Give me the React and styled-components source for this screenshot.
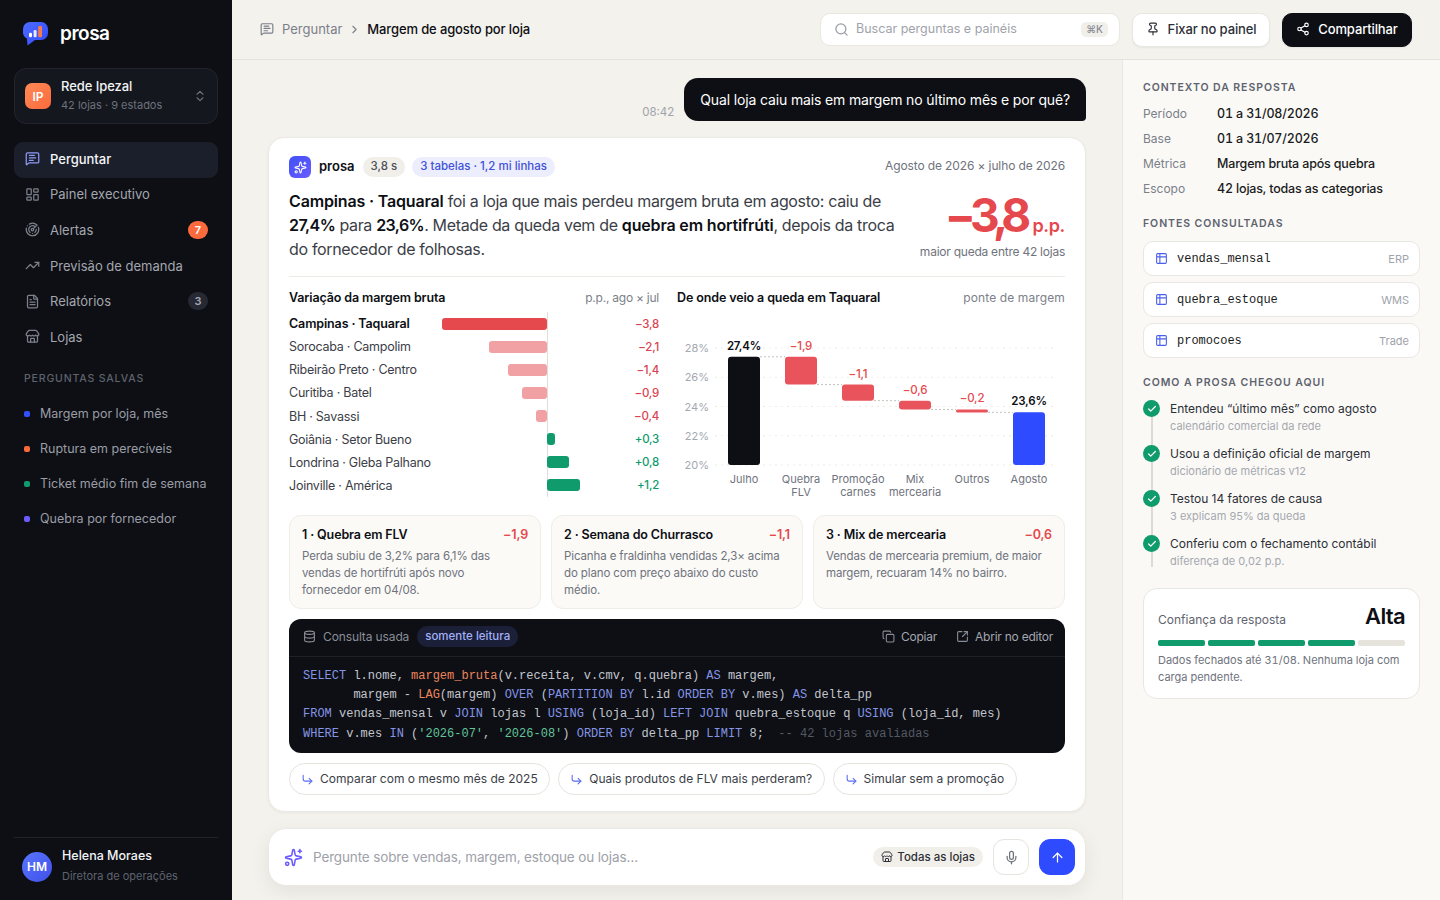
import React from 'react';
import styled, { createGlobalStyle } from 'styled-components';
import {
  MessageSquareText, LayoutDashboard, Radar, TrendingUp, FileText, Store, ChevronsUpDown,
  ChevronRight, Search, Pin, Share2, Database, Copy, SquareArrowOutUpRight, CornerDownRight,
  Sparkles, Mic, ArrowUp, Table2, Check,
} from 'lucide-react';

const Global = createGlobalStyle`
  * { box-sizing: border-box; }
  html, body { margin: 0; height: 100%; background: #f3f2ed; }
  body { font-family: Inter, "Noto Sans", sans-serif; color: #0d0f14; overflow: hidden; }
  svg { display: block; flex: none; }
`;

const Page = styled.div`display: flex; width: 1440px; height: 900px; overflow: hidden;`;

/* Sidebar */
const Sidebar = styled.aside`
  width: 232px; flex: none; background: #0d0f14; padding: 0 14px; display: flex; flex-direction: column;
`;
const Brand = styled.div`display: flex; align-items: center; gap: 10px; height: 68px; padding: 0 0 0 9px;`;
const BrandName = styled.span`font-size: 19px; font-weight: 600; color: #fff; letter-spacing: -0.025em; margin-bottom: 1px;`;
const OrgCard = styled.div`
  height: 56px; border: 1px solid #22252e; background: #14171e; border-radius: 12px;
  display: flex; align-items: center; padding: 0 10px; gap: 10px;
`;
const OrgAvatar = styled.div`
  width: 26px; height: 26px; border-radius: 7px; background: linear-gradient(135deg, #ff8a57, #fb6a3c);
  color: #fff; font-size: 12px; font-weight: 600; display: flex; align-items: center; justify-content: center;
`;
const OrgText = styled.div`flex: 1; display: flex; flex-direction: column; gap: 2px; margin-bottom: 2px;`;
const OrgName = styled.div`font-size: 13px; font-weight: 500; color: #f2f3f5; line-height: 18px; letter-spacing: -0.005em;`;
const OrgSub = styled.div`font-size: 11px; color: #6d717c; line-height: 16px;`;
const Nav = styled.nav`display: flex; flex-direction: column; margin-top: 18px;`;
const NavItem = styled.div`
  height: 35.6px; display: flex; align-items: center; gap: 10px; padding: 0 10px 2px 11px; border-radius: 9px;
  font-size: 13px; color: ${p => (p.$active ? '#f5f6f8' : '#a3a6af')};
  background: ${p => (p.$active ? '#1b1e2b' : 'transparent')};
  font-weight: ${p => (p.$active ? 500 : 400)};
  svg { color: ${p => (p.$active ? '#8d9bf5' : '#7d818c')}; }
`;
const NavLabel = styled.span`flex: 1;`;
const Badge = styled.span`
  min-width: 20px; height: 18px; border-radius: 9px; font-size: 11px; font-weight: 600; line-height: 18px; text-align: center;
  color: ${p => (p.$hot ? '#fff' : '#a3a6af')}; background: ${p => (p.$hot ? '#fb6a3c' : '#262934')};
`;
const SectionLabel = styled.div`
  margin: 16.6px 0 0 10px; font-size: 10.5px; font-weight: 500; letter-spacing: 0.08em; color: #5f636e; line-height: 14px;
`;
const Saved = styled.div`display: flex; flex-direction: column; margin-top: 10px;`;
const SavedItem = styled.div`
  height: 35px; display: flex; align-items: center; gap: 10px; padding-left: 10px; font-size: 12.5px; color: #9a9da6;
`;
const Dot = styled.i`width: 6px; height: 6px; border-radius: 2px; background: ${p => p.$c};`;
const UserFoot = styled.div`
  margin-top: auto; height: 63px; border-top: 1px solid #1f222a; display: flex; align-items: center; gap: 10px; padding: 0 0 5px 8px;
`;
const UserAvatar = styled.div`
  width: 30px; height: 30px; border-radius: 50%; background: linear-gradient(135deg, #5a74ff, #3f51e8); color: #fff;
  font-size: 12px; font-weight: 600; display: flex; align-items: center; justify-content: center;
`;
const UserInfo = styled.div`margin-bottom: 2px;`;
const UserName = styled.div`font-size: 12.5px; font-weight: 500; color: #f2f3f5; line-height: 18px;`;
const UserRole = styled.div`font-size: 11px; color: #5f636e; line-height: 16px; margin-top: 3px;`;

/* Layout */
const Content = styled.div`flex: 1; min-width: 0; display: flex; flex-direction: column;`;
const Topbar = styled.header`
  height: 60px; flex: none; border-bottom: 1px solid #e4e2db; display: flex; align-items: center; padding: 0 28px;
`;
const Crumbs = styled.div`flex: 1; display: flex; align-items: center; font-size: 13px; color: #7b7f89; padding-bottom: 2px; svg { color: #7b7f89; }`;
const CrumbCurrent = styled.span`color: #0d0f14; font-weight: 500; letter-spacing: -0.01em;`;
const SearchBox = styled.div`
  width: 300px; height: 33px; background: #fff; border: 1px solid #e9e7e1; border-radius: 10px; display: flex; align-items: center;
  padding: 0 11px 2px 13px; gap: 7px; font-size: 12.5px; color: #a0a3ab; svg { color: #9a9da6; margin-top: 2px; }
`;
const SearchText = styled.span`flex: 1;`;
const Kbd = styled.span`
  background: #f0efe9; color: #888b94; border-radius: 5px; font-size: 10px; padding: 0 5px; height: 15px; line-height: 15px; font-weight: 500; margin-top: 2px;
`;
const Btn = styled.button`
  width: ${p => p.$w}px; height: 34px; margin-left: 12px; border-radius: 10px; font: inherit; font-size: 13px; font-weight: 500; letter-spacing: -0.01em;
  display: flex; align-items: center; justify-content: center; gap: 8px;
  padding: 0 0 2px; border: 1px solid ${p => (p.$dark ? '#0d0f14' : '#e9e7e1')}; background: ${p => (p.$dark ? '#0d0f14' : '#fff')};
  color: ${p => (p.$dark ? '#fff' : '#2c2f37')}; box-shadow: 0 1px 2px rgba(13,15,20,.06);
`;
const Body = styled.div`flex: 1; min-height: 0; display: flex;`;
const Main = styled.main`flex: 1; min-width: 0; padding: 18px 36px 0; display: flex; flex-direction: column;`;

const UserRow = styled.div`display: flex; justify-content: flex-end; align-items: flex-end; gap: 10px;`;
const Time = styled.span`font-size: 11.5px; color: #a0a3ab; line-height: 14px; margin-bottom: 2px;`;
const Bubble = styled.div`
  height: 43px; background: #0d0f14; color: #fff; border-radius: 14px 14px 4px 14px; font-size: 14px; letter-spacing: -0.01em; display: flex; align-items: center; padding: 0 16px;
`;

/* Answer card */
const Card = styled.section`
  margin-top: 16px; height: 675px; background: #fff; border: 1px solid #ebe9e3; border-radius: 16px; padding: 18px 20px 0;
  box-shadow: 0 1px 3px rgba(13,15,20,.05);
`;
const CardHead = styled.div`height: 22px; display: flex; align-items: center;`;
const AiIcon = styled.div`
  width: 22px; height: 22px; border-radius: 6px; background: linear-gradient(135deg, #3f51f5, #6a5cff); color: #fff;
  display: flex; align-items: center; justify-content: center; margin-right: 8px;
`;
const AiName = styled.span`font-size: 13px; font-weight: 600; margin: 0 8px 2px 0;`;
const Pill = styled.span`
  height: 20px; line-height: 19px; border-radius: 10px; padding: 0 8px; font-size: 11.5px; font-weight: 500; margin-right: 7px;
  color: ${p => (p.$blue ? '#3f51d8' : '#4c4f58')}; background: ${p => (p.$blue ? '#ecedfd' : '#f1efe9')};
`;
const HeadRight = styled.span`margin: 0 0 3px auto; font-size: 12px; letter-spacing: -0.01em; color: #6f737d;`;
const Summary = styled.div`display: flex; justify-content: space-between; margin-top: 11px; padding-bottom: 15px; border-bottom: 1px solid #ecebe5;`;
const Headline = styled.p`
  margin: 0; width: 612px; font-size: 16px; line-height: 24px; color: #3b3e47; letter-spacing: -0.021em;
  b { color: #0d0f14; font-weight: 600; letter-spacing: -0.01em; }
`;
const Num = styled.b`&& { letter-spacing: -0.035em; }`;
const Stat = styled.div`display: flex; flex-direction: column; align-items: flex-end; padding-top: 2px;`;
const StatValue = styled.div`
  height: 48px; font-size: 46px; line-height: 48px; font-weight: 700; color: #e5484d; letter-spacing: -0.125em;
  span { font-size: 18px; line-height: 18px; font-weight: 600; letter-spacing: -0.02em; margin-left: 7px; }
`;
const StatSub = styled.div`font-size: 12px; letter-spacing: -0.02em; color: #6f737d; line-height: 16px; margin-top: 5px;`;

const Charts = styled.div`display: grid; grid-template-columns: 370px 388px; gap: 18px; margin-top: 12px; height: 208px;`;
const ChartTitleRow = styled.div`display: flex; justify-content: space-between; align-items: center; height: 16px; margin-bottom: 7px;`;
const ChartTitle = styled.span`font-size: 12.5px; font-weight: 600; letter-spacing: -0.01em;`;
const ChartNote = styled.span`font-size: 12px; letter-spacing: ${p => p.$ls}em; color: #7b7f89;`;
const BarRow = styled.div`
  display: grid; grid-template-columns: 153px 105px 72px 40px; height: 23.13px; align-items: stretch; font-size: 12.5px;
  color: ${p => (p.$lead ? '#0d0f14' : '#3b3e47')}; font-weight: ${p => (p.$lead ? 600 : 400)};
  letter-spacing: ${p => (p.$lead ? '-0.01em' : '-0.02em')};
`;
const BarLabel = styled.span`align-self: center;`;
const NegCell = styled.div`display: flex; justify-content: flex-end; align-items: center;`;
const PosCell = styled.div`display: flex; align-items: center; box-shadow: inset 1px 0 0 #dfddd6;`;
const Bar = styled.div`
  height: 12px; border-radius: 3px;
  background: ${p => (p.$kind === 'lead' ? '#e5484d' : p.$kind === 'neg' ? '#f1a0a3' : '#0f9b6c')};
`;
const BarValue = styled.span`
  align-self: center; text-align: right; font-size: 11.5px; letter-spacing: -0.02em; font-weight: 500;
  color: ${p => (p.$pos ? '#0f9b6c' : '#d9434f')};
`;

const Insights = styled.div`display: grid; grid-template-columns: repeat(3, 1fr); gap: 10px; margin-top: 18px;`;
const Insight = styled.div`height: 94px; border: 1px solid #efede7; background: #fbfaf7; border-radius: 12px; padding: 10px 12px;`;
const InsightHead = styled.div`display: flex; justify-content: space-between; font-size: 12.5px; letter-spacing: -0.01em; line-height: 17px; font-weight: 600;`;
const InsightDelta = styled.span`color: #e5484d;`;
const InsightText = styled.p`margin: 5px 4px 0 0; font-size: 11.5px; letter-spacing: -0.01em; line-height: 17px; color: #6f737d;`;

const Sql = styled.div`margin-top: 10px; height: 134px; background: #0d0f14; border-radius: 12px; overflow: hidden;`;
const SqlHead = styled.div`
  height: 38px; border-bottom: 1px solid #1e2129; display: flex; align-items: center; padding: 0 12px 2px 14px; font-size: 12px; letter-spacing: -0.01em; color: #8a8d97;
  svg { color: #8a8d97; }
`;
const ReadOnly = styled.span`
  margin-left: 8px; height: 21px; line-height: 21px; border-radius: 10px; padding: 0 8px; background: #1b2038; color: #a3b0f8; font-weight: 500; font-size: 11.5px; letter-spacing: 0;
`;
const SqlActions = styled.div`margin-left: auto; display: flex; gap: 19px;`;
const SqlAction = styled.span`display: flex; align-items: center; gap: 6px; color: #a3a6af; letter-spacing: -0.02em;`;
const SqlLabel = styled.span`margin-left: 7px;`;
const Code = styled.pre`
  margin: 0; padding: 10px 14px; font-family: "Liberation Mono", "DejaVu Sans Mono", monospace; font-size: 12px; line-height: 19.2px; color: #c3c6ce;
`;
const K = styled.span`color: #8494e6;`;
const F = styled.span`color: #ec855c;`;
const S = styled.span`color: #62c49c;`;
const C = styled.span`color: #555963;`;

const Chips = styled.div`display: flex; gap: 8px; margin-top: 10px;`;
const Chip = styled.div`
  flex: none; white-space: nowrap; height: 32px; border-radius: 16px; border: 1px solid #e6e4de; background: #fff; display: flex; align-items: center; gap: 6px; padding: 0 11.5px 2px 11px;
  font-size: 12px; color: #3b3e47; svg { color: #5a6cf0; margin-top: 2px; }
`;

const Composer = styled.div`
  margin-top: 16px; height: 58px; background: #fff; border: 1px solid #ebe9e3; border-radius: 18px; display: flex; align-items: center; padding: 0 10px 0 15px;
  box-shadow: 0 6px 20px rgba(13,15,20,.07);
  & > svg:first-child { color: #6a5cff; }
`;
const Placeholder = styled.span`flex: 1; margin-left: 10px; font-size: 13.5px; letter-spacing: -0.01em; color: #9ea1a9;`;
const ScopePill = styled.span`
  height: 20px; border-radius: 10px; background: #f1efe9; display: flex; align-items: center; gap: 4px; padding: 0 8px; font-size: 11.5px; font-weight: 500; color: #2c2f37;
`;
const IconBtn = styled.div`
  width: 36px; height: 36px; border-radius: 11px; margin-left: 10px; display: flex; align-items: center; justify-content: center;
  border: 1px solid ${p => (p.$primary ? '#2f4bff' : '#e6e4de')}; background: ${p => (p.$primary ? '#2f4bff' : '#fff')}; color: ${p => (p.$primary ? '#fff' : '#6f737d')};
`;

/* Right panel */
const Panel = styled.aside`
  width: 318px; flex: none; border-left: 1px solid #e9e7e1; background: #faf9f6; padding: 20px 20px 0;
`;
const PanelTitle = styled.h3`
  margin: ${p => p.$mt || 0}px 0 0; height: 14px; font-size: 10.5px; font-weight: 600; line-height: 16px; letter-spacing: 0.09em; color: #5f636e;
`;
const Facts = styled.dl`margin: 7px 0 0; display: grid; grid-template-columns: 74px 1fr; grid-auto-rows: 25px; align-items: center;`;
const FactKey = styled.dt`font-size: 12px; color: #7b7f89;`;
const FactVal = styled.dd`margin: 0; font-size: 12.5px; letter-spacing: -0.014em; font-variant-numeric: tabular-nums; color: #1a1c22; font-weight: 500;`;
const Sources = styled.div`display: flex; flex-direction: column; gap: 6px; margin-top: 11px;`;
const Source = styled.div`
  height: 35px; background: #fff; border: 1px solid #e9e7e1; border-radius: 10px; display: flex; align-items: center; padding: 0 10px 0 11px; gap: 9px;
  svg { color: #4a5ff0; }
`;
const SourceName = styled.span`flex: 1; font-family: "Liberation Mono", "DejaVu Sans Mono", monospace; font-size: 12px; color: #1a1c22;`;
const SourceTag = styled.span`font-size: 11px; color: #a0a3ab;`;
const Steps = styled.div`display: flex; flex-direction: column; gap: 9px; margin-top: 10px;`;
const Step = styled.div`
  position: relative; padding-left: 27px; height: 36px;
  &::before { content: ''; position: absolute; left: 8px; top: 1px; width: 1.5px; height: ${p => (p.$last ? '32px' : '46px')}; background: #dcdad3; }
`;
const StepIcon = styled.div`
  position: absolute; left: 0; top: 1px; width: 17px; height: 17px; border-radius: 50%; background: #0f9b6c; color: #fff; display: flex; align-items: center; justify-content: center;
`;
const StepTitle = styled.div`font-size: 12px; padding-top: 1px; line-height: 18px; color: #2c2f37;`;
const StepSub = styled.div`font-size: 11px; line-height: 17px; color: #a5a8af;`;
const Confidence = styled.div`
  margin-top: 18px; height: 111px; background: #fff; border: 1px solid #e9e7e1; border-radius: 14px; padding: 14px 14px 0;
`;
const ConfHead = styled.div`display: flex; justify-content: space-between; align-items: center; height: 28px; font-size: 12px; color: #5f636e;`;
const ConfLabel = styled.span`margin-top: 4px;`;
const ConfLevel = styled.span`font-size: 22px; font-weight: 600; color: #0d0f14; letter-spacing: -0.03em; margin-bottom: 2px;`;
const Meter = styled.div`display: grid; grid-template-columns: repeat(5, 1fr); gap: 3px; margin-top: 9px;`;
const MeterSeg = styled.i`height: 6px; border-radius: 2px; background: ${p => (p.$on ? '#0f9b6c' : '#e6e3dd')};`;
const ConfText = styled.p`margin: 6px 0 0; font-size: 11px; font-variant-numeric: tabular-nums; line-height: 17px; color: #6f737d;`;

const Logo = () => (
  <svg width="26" height="24" viewBox="0 0 26 24" style={{ marginRight: 1 }}>
    <defs><linearGradient id="lg" x1="0" y1="0" x2="1" y2="1"><stop offset="0" stopColor="#4f6bff" /><stop offset="1" stopColor="#2f4bff" /></linearGradient></defs>
    <path d="M7 0h11a7 7 0 0 1 7 7v4a7 7 0 0 1-7 7h-6L4.500 23.500 3.900 16.600A7 7 0 0 1 0 11V7a7 7 0 0 1 7-7z" fill="url(#lg)" />
    <rect x="6" y="10.700" width="3" height="4.600" rx="1.200" fill="#fff" />
    <rect x="10.600" y="8" width="3" height="7.300" rx="1.200" fill="#e6eaff" />
    <rect x="15.200" y="4" width="3.800" height="11.300" rx="1.200" fill="#fb7a4a" />
  </svg>
);

const stores = [
  ['Campinas · Taquaral', -3.8, '−3,8'], ['Sorocaba · Campolim', -2.1, '−2,1'], ['Ribeirão Preto · Centro', -1.4, '−1,4'],
  ['Curitiba · Batel', -0.9, '−0,9'], ['BH · Savassi', -0.4, '−0,4'], ['Goiânia · Setor Bueno', 0.3, '+0,3'],
  ['Londrina · Gleba Palhano', 0.8, '+0,8'], ['Joinville · América', 1.2, '+1,2'],
];

const Waterfall = () => {
  const Y = v => 153 - (v - 20) * 14.62;
  const bars = [
    { x: 51, top: 27.4, bot: 20, c: '#0d0f14', lab: '27,4%', dark: true, names: ['Julho'] },
    { x: 108, top: 27.4, bot: 25.5, c: '#e9545c', lab: '−1,9', names: ['Quebra', 'FLV'] },
    { x: 165, top: 25.5, bot: 24.4, c: '#e9545c', lab: '−1,1', names: ['Promoção', 'carnes'] },
    { x: 222, top: 24.4, bot: 23.8, c: '#e9545c', lab: '−0,6', names: ['Mix', 'mercearia'] },
    { x: 279, top: 23.8, bot: 23.6, c: '#e9545c', lab: '−0,2', names: ['Outros'] },
    { x: 336, top: 23.6, bot: 20, c: '#2f4bff', lab: '23,6%', dark: true, names: ['Agosto'] },
  ];
  return (
    <svg width="388" height="192" viewBox="0 0 388 192" fontFamily="Inter, sans-serif">
      {[28, 26, 24, 22, 20].map(v => (
        <g key={v}>
          <line x1="38" x2="378" y1={Y(v)} y2={Y(v)} stroke="#ecebe5" strokeWidth="1" strokeDasharray="2 4" />
          <text x="32" y={Y(v) + 4} textAnchor="end" fontSize="11" fill="#a5a8af">{v}%</text>
        </g>
      ))}
      {bars.slice(0, -1).map((b, i) => (
        <line key={i} x1={b.x + 32} x2={bars[i + 1].x} y1={Y(b.bot === 20 ? b.top : b.bot)} y2={Y(b.bot === 20 ? b.top : b.bot)} stroke="#c4c2bb" strokeDasharray="2 2" />
      ))}
      {bars.map(b => {
        const h = Math.max(Y(b.bot) - Y(b.top), 3);
        return (
          <g key={b.lab}>
            <rect x={b.x} y={Y(b.top)} width="32" height={h} rx={h < 6 ? 1.500 : 3} fill={b.c} />
            <text x={b.x + 16} y={Y(b.top) - 7} textAnchor="middle" fontSize="11.500" letterSpacing="-0.2" fontWeight={b.dark ? 600 : 500} fill={b.dark ? '#0d0f14' : '#e5484d'}>{b.lab}</text>
            {b.names.map((n, i) => (
              <text key={n} x={b.x + 16} y={171 + i * 13} textAnchor="middle" fontSize="11" fill="#6f737d">{n}</text>
            ))}
          </g>
        );
      })}
    </svg>
  );
};

export default function App() {
  return (
    <Page>
      <Global />
      <Sidebar>
        <Brand><Logo /><BrandName>prosa</BrandName></Brand>
        <OrgCard>
          <OrgAvatar>IP</OrgAvatar>
          <OrgText><OrgName>Rede Ipezal</OrgName><OrgSub>42 lojas · 9 estados</OrgSub></OrgText>
          <ChevronsUpDown size={14} color="#6d717c" />
        </OrgCard>
        <Nav>
          <NavItem $active><MessageSquareText size={15} /><NavLabel>Perguntar</NavLabel></NavItem>
          <NavItem><LayoutDashboard size={15} /><NavLabel>Painel executivo</NavLabel></NavItem>
          <NavItem><Radar size={15} /><NavLabel>Alertas</NavLabel><Badge $hot>7</Badge></NavItem>
          <NavItem><TrendingUp size={15} /><NavLabel>Previsão de demanda</NavLabel></NavItem>
          <NavItem><FileText size={15} /><NavLabel>Relatórios</NavLabel><Badge>3</Badge></NavItem>
          <NavItem><Store size={15} /><NavLabel>Lojas</NavLabel></NavItem>
        </Nav>
        <SectionLabel>PERGUNTAS SALVAS</SectionLabel>
        <Saved>
          <SavedItem><Dot $c="#3350ff" />Margem por loja, mês</SavedItem>
          <SavedItem><Dot $c="#fb6a3c" />Ruptura em perecíveis</SavedItem>
          <SavedItem><Dot $c="#0f9b6c" />Ticket médio fim de semana</SavedItem>
          <SavedItem><Dot $c="#6a5cff" />Quebra por fornecedor</SavedItem>
        </Saved>
        <UserFoot>
          <UserAvatar>HM</UserAvatar>
          <UserInfo><UserName>Helena Moraes</UserName><UserRole>Diretora de operações</UserRole></UserInfo>
        </UserFoot>
      </Sidebar>
      <Content>
        <Topbar>
          <Crumbs>
            <MessageSquareText size={14} style={{ marginRight: 8 }} />
            Perguntar
            <ChevronRight size={13} style={{ margin: '1px 6px 0' }} />
            <CrumbCurrent>Margem de agosto por loja</CrumbCurrent>
          </Crumbs>
          <SearchBox>
            <Search size={15} /><SearchText>Buscar perguntas e painéis</SearchText><Kbd>⌘K</Kbd>
          </SearchBox>
          <Btn $w={138}><Pin size={14} />Fixar no painel</Btn>
          <Btn $w={130} $dark><Share2 size={14} />Compartilhar</Btn>
        </Topbar>
        <Body>
          <Main>
            <UserRow>
              <Time>08:42</Time>
              <Bubble>Qual loja caiu mais em margem no último mês e por quê?</Bubble>
            </UserRow>
            <Card>
              <CardHead>
                <AiIcon><Sparkles size={13} /></AiIcon>
                <AiName>prosa</AiName>
                <Pill>3,8 s</Pill>
                <Pill $blue>3 tabelas · 1,2 mi linhas</Pill>
                <HeadRight>Agosto de 2026 × julho de 2026</HeadRight>
              </CardHead>
              <Summary>
                <Headline>
                  <b>Campinas · Taquaral</b> foi a loja que mais perdeu margem bruta em agosto: caiu de <Num>27,4%</Num> para <Num>23,6%</Num>. Metade da queda vem de <b>quebra em hortifrúti</b>, depois da troca do fornecedor de folhosas.
                </Headline>
                <Stat>
                  <StatValue>−3,8<span>p.p.</span></StatValue>
                  <StatSub>maior queda entre 42 lojas</StatSub>
                </Stat>
              </Summary>
              <Charts>
                <div>
                  <ChartTitleRow><ChartTitle>Variação da margem bruta</ChartTitle><ChartNote $ls={-0.02}>p.p., ago × jul</ChartNote></ChartTitleRow>
                  {stores.map(([name, v, txt], i) => (
                    <BarRow key={name} $lead={i === 0}>
                      <BarLabel>{name}</BarLabel>
                      <NegCell>{v < 0 && <Bar $kind={i === 0 ? 'lead' : 'neg'} style={{ width: -v * 27.6 }} />}</NegCell>
                      <PosCell>{v > 0 && <Bar $kind="pos" style={{ width: v * 27.6 }} />}</PosCell>
                      <BarValue $pos={v > 0}>{txt}</BarValue>
                    </BarRow>
                  ))}
                </div>
                <div>
                  <ChartTitleRow><ChartTitle>De onde veio a queda em Taquaral</ChartTitle><ChartNote $ls={0.01}>ponte de margem</ChartNote></ChartTitleRow>
                  <Waterfall />
                </div>
              </Charts>
              <Insights>
                <Insight>
                  <InsightHead><span>1 · Quebra em FLV</span><InsightDelta>−1,9</InsightDelta></InsightHead>
                  <InsightText>Perda subiu de 3,2% para 6,1% das vendas de hortifrúti após novo fornecedor em 04/08.</InsightText>
                </Insight>
                <Insight>
                  <InsightHead><span>2 · Semana do Churrasco</span><InsightDelta>−1,1</InsightDelta></InsightHead>
                  <InsightText>Picanha e fraldinha vendidas 2,3× acima do plano com preço abaixo do custo médio.</InsightText>
                </Insight>
                <Insight>
                  <InsightHead><span>3 · Mix de mercearia</span><InsightDelta>−0,6</InsightDelta></InsightHead>
                  <InsightText>Vendas de mercearia premium, de maior margem, recuaram 14% no bairro.</InsightText>
                </Insight>
              </Insights>
              <Sql>
                <SqlHead>
                  <Database size={13} />
                  <SqlLabel>Consulta usada</SqlLabel>
                  <ReadOnly>somente leitura</ReadOnly>
                  <SqlActions>
                    <SqlAction><Copy size={13} />Copiar</SqlAction>
                    <SqlAction><SquareArrowOutUpRight size={13} />Abrir no editor</SqlAction>
                  </SqlActions>
                </SqlHead>
                <Code>
                  <K>SELECT</K> l.nome, <F>margem_bruta</F>(v.receita, v.cmv, q.quebra) <K>AS</K> margem,{'\n'}
                  {'       '}margem - <F>LAG</F>(margem) <K>OVER</K> (<K>PARTITION BY</K> l.id <K>ORDER BY</K> v.mes) <K>AS</K> delta_pp{'\n'}
                  <K>FROM</K> vendas_mensal v <K>JOIN</K> lojas l <K>USING</K> (loja_id) <K>LEFT JOIN</K> quebra_estoque q <K>USING</K> (loja_id, mes){'\n'}
                  <K>WHERE</K> v.mes <K>IN</K> (<S>'2026-07'</S>, <S>'2026-08'</S>) <K>ORDER BY</K> delta_pp <K>LIMIT</K> 8;  <C>-- 42 lojas avaliadas</C>
                </Code>
              </Sql>
              <Chips>
                <Chip><CornerDownRight size={13} />Comparar com o mesmo mês de 2025</Chip>
                <Chip><CornerDownRight size={13} />Quais produtos de FLV mais perderam?</Chip>
                <Chip><CornerDownRight size={13} />Simular sem a promoção</Chip>
              </Chips>
            </Card>
            <Composer>
              <Sparkles size={19} />
              <Placeholder>Pergunte sobre vendas, margem, estoque ou lojas…</Placeholder>
              <ScopePill><Store size={12} />Todas as lojas</ScopePill>
              <IconBtn><Mic size={15} /></IconBtn>
              <IconBtn $primary><ArrowUp size={15} /></IconBtn>
            </Composer>
          </Main>
          <Panel>
            <PanelTitle>CONTEXTO DA RESPOSTA</PanelTitle>
            <Facts>
              <FactKey>Período</FactKey><FactVal>01 a 31/08/2026</FactVal>
              <FactKey>Base</FactKey><FactVal>01 a 31/07/2026</FactVal>
              <FactKey>Métrica</FactKey><FactVal>Margem bruta após quebra</FactVal>
              <FactKey>Escopo</FactKey><FactVal>42 lojas, todas as categorias</FactVal>
            </Facts>
            <PanelTitle $mt={15}>FONTES CONSULTADAS</PanelTitle>
            <Sources>
              <Source><Table2 size={13} /><SourceName>vendas_mensal</SourceName><SourceTag>ERP</SourceTag></Source>
              <Source><Table2 size={13} /><SourceName>quebra_estoque</SourceName><SourceTag>WMS</SourceTag></Source>
              <Source><Table2 size={13} /><SourceName>promocoes</SourceName><SourceTag>Trade</SourceTag></Source>
            </Sources>
            <PanelTitle $mt={17}>COMO A PROSA CHEGOU AQUI</PanelTitle>
            <Steps>
              {[
                ['Entendeu “último mês” como agosto', 'calendário comercial da rede'],
                ['Usou a definição oficial de margem', 'dicionário de métricas v12'],
                ['Testou 14 fatores de causa', '3 explicam 95% da queda'],
                ['Conferiu com o fechamento contábil', 'diferença de 0,02 p.p.'],
              ].map(([t, s], i) => (
                <Step key={t} $last={i === 3}>
                  <StepIcon><Check size={10} strokeWidth={3} /></StepIcon>
                  <StepTitle>{t}</StepTitle>
                  <StepSub>{s}</StepSub>
                </Step>
              ))}
            </Steps>
            <Confidence>
              <ConfHead><ConfLabel>Confiança da resposta</ConfLabel><ConfLevel>Alta</ConfLevel></ConfHead>
              <Meter>{[1, 1, 1, 1, 0].map((on, i) => <MeterSeg key={i} $on={!!on} />)}</Meter>
              <ConfText>Dados fechados até 31/08. Nenhuma loja com carga pendente.</ConfText>
            </Confidence>
          </Panel>
        </Body>
      </Content>
    </Page>
  );
}
